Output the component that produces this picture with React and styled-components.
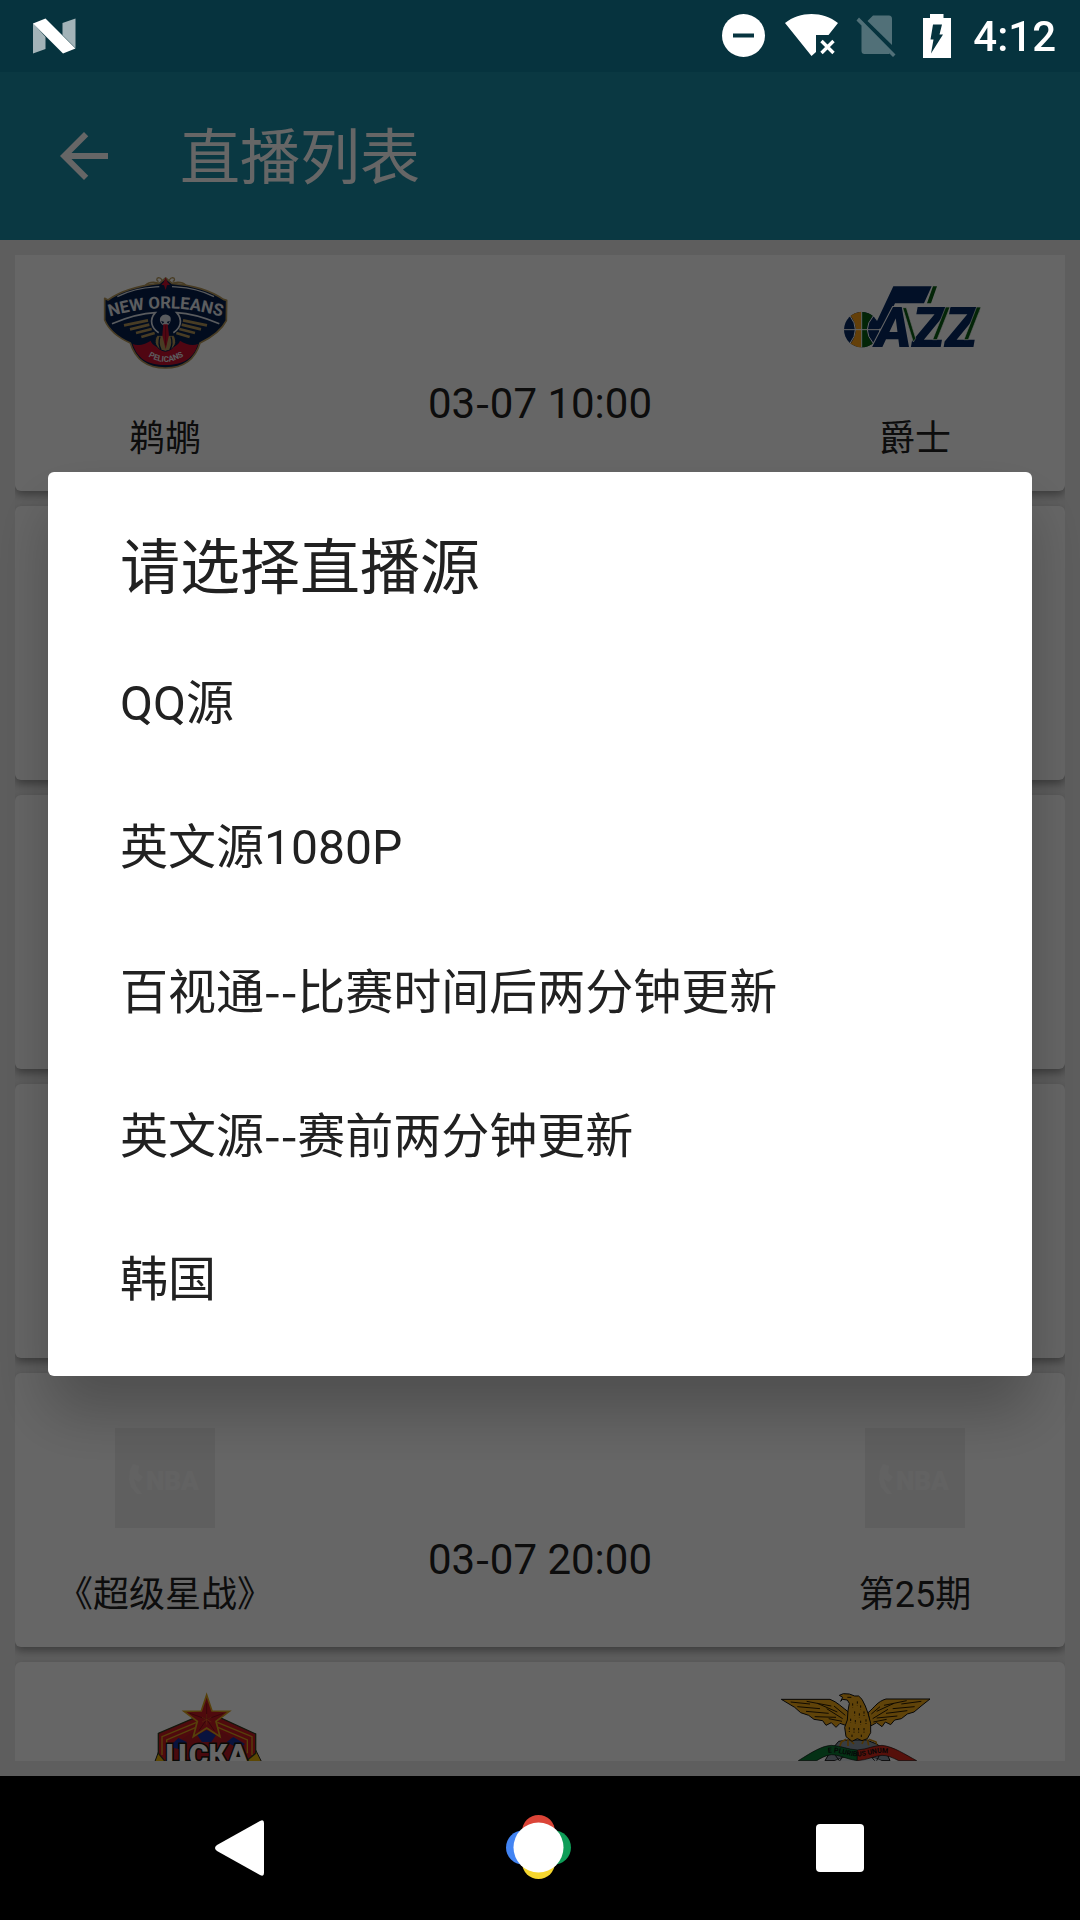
import React, { useLayoutEffect, useRef } from "react";
import styled, { createGlobalStyle } from "styled-components";

const GlobalStyle = createGlobalStyle`
  * { box-sizing: border-box; }
  body {
    margin: 0;
    font-family: Roboto, "Noto Sans CJK SC", sans-serif;
    background: #000;
  }
  button { font: inherit; color: inherit; background: none; border: 0; padding: 0; }
  h1, h2, p, ul { margin: 0; padding: 0; font-weight: 400; }
  ul { list-style: none; }
  svg { display: block; flex: none; }
`;

const Screen = styled.div`
  display: flex;
  flex-direction: column;
  height: 100vh;
  overflow: hidden;
  background: #ebebeb;
`;

const StatusBar = styled.header`
  display: flex;
  align-items: center;
  justify-content: space-between;
  flex: none;
  height: 72px;
  padding: 0 24px 0 32px;
  background: #0f809b;
  color: #fff;
`;

const StatusItem = styled.div`
  position: relative;
  z-index: 2;
  display: flex;
  align-items: center;
  gap: 18px;
`;

const Clock = styled.time`
  padding-top: 2px;
  font-size: 42px;
  line-height: 48px;
  font-weight: 500;
`;

const AppBar = styled.div`
  display: flex;
  align-items: center;
  flex: none;
  gap: 60px;
  height: 168px;
  padding: 0 48px;
  background: #1b8ca6;
  color: #fff;
`;

const BackButton = styled.button`
  width: 72px;
  height: 72px;
`;

const PageTitle = styled.h1`
  padding-top: 6px;
  font-size: 60px;
  line-height: 72px;
`;

const ListArea = styled.main`
  display: flex;
  flex: 1;
  min-height: 0;
  padding: 15px;
`;

const MatchList = styled.ul`
  display: flex;
  flex-direction: column;
  flex: 1;
  gap: 15px;
  overflow-y: auto;
  scrollbar-width: none;
`;

const MatchCard = styled.li`
  display: grid;
  grid-template-columns: ${(p) => p.$columns || "300px 1fr 300px"};
  flex: none;
  min-height: 274px;
  border-radius: 6px;
  background: #fff;
  box-shadow: 0 4px 8px rgba(0, 0, 0, 0.36);
`;

const Team = styled.div`
  display: flex;
  flex-direction: column;
  align-items: center;
  gap: 20px;
  padding-top: 30px;
`;

const TeamName = styled.p`
  font-size: 36px;
  line-height: 44px;
  color: #212121;
`;

const Kickoff = styled.time`
  align-self: end;
  padding-bottom: 63px;
  font-size: 42px;
  line-height: 48px;
  text-align: center;
  color: #212121;
`;

const Dash = styled.span`
  font-family: "Noto Sans CJK SC", sans-serif;
  line-height: 1;
`;

const Overlay = styled.div`
  position: fixed;
  inset: 0;
  z-index: 1;
  display: flex;
  align-items: center;
  padding: 72px 48px 144px;
  background: rgba(0, 0, 0, 0.6);
`;

const Dialog = styled.section`
  flex: 1;
  padding: 57px 0 24px;
  border-radius: 6px;
  background: #fff;
  color: #212121;
  box-shadow: 0 36px 60px rgba(0, 0, 0, 0.24);
`;

const DialogTitle = styled.h2`
  padding: 0 72px 23px;
  font-size: 60px;
  line-height: 80px;
`;

const SourceButton = styled.button`
  display: block;
  width: 100%;
  height: 144px;
  padding: 0 72px;
  font-size: 48px;
  line-height: 56px;
  text-align: left;
`;

const NavBar = styled.nav`
  position: relative;
  z-index: 2;
  display: flex;
  flex: none;
  height: 144px;
  padding: 0 90px;
  background: #000;
`;

const NavButton = styled.button`
  display: flex;
  flex: 1;
  align-items: center;
  justify-content: center;
`;

function StatusIcons() {
  return (
    <>
      <svg width="44" height="44" viewBox="722 15 44 44" aria-hidden="true">
        <circle cx="743.5" cy="36.5" r="21.5" fill="#fff" />
        <path d="M733 34.5h21v4h-21z" fill="#07343f" />
      </svg>
      <svg width="54" height="44" viewBox="784 15 54 44" aria-hidden="true">
        <path d="M785 24C800 12 823 12 838 24L828.500 36H816V53L811.500 57Z" fill="#fff" />
        <path d="M821.500 42L833.500 54M833.500 42L821.500 54" stroke="#fff" strokeWidth="3.400" />
      </svg>
      <svg width="48" height="44" viewBox="856 15 48 44" aria-hidden="true">
        <g fill="#fff" opacity=".3">
          <path d="M873 16.500H889Q892 16.500 892 20V46L867.500 22Z" />
          <path d="M859 18.500L895.500 55.500L893 58L889.500 54.500Q888.800 55 888 55H864.500Q861.500 55 861.500 52V26.500L856.500 21.500Z" />
        </g>
      </svg>
      <svg width="33" height="44" viewBox="922 14 33 44" aria-hidden="true">
        <path fill="#fff" fillRule="evenodd" d="M930 14H943.500V18H951V58H923V18H930ZM933 24.500H942L939.500 34.500H943L931 53.500L933.500 39.500H930.500Z" />
      </svg>
    </>
  );
}

function NougatIcon() {
  return (
    <svg width="44" height="36" viewBox="32 18 44 36" aria-hidden="true">
      <path d="M33 23L45.500 37V49L33 53.500ZM75.500 18.500V48L62.500 35V23Z" fill="#fff" opacity=".63" />
      <path d="M33 23.500L45.500 18.500L75.500 48.500L63 53.500Z" fill="#fff" />
    </svg>
  );
}

function PelicansLogo() {
  const shield =
    "M74 145L84 150C130 116 195 105 238 100L257 84L276 100C330 105 390 120 430 148L440 151L439 212C426 238 400 260 360 279C345 330 310 354 256 354C202 354 166 328 151 279C112 262 85 236 74 210Z";
  return (
    <svg width="150" height="150" viewBox="30 -9 450 450" role="img" aria-label="New Orleans Pelicans">
      <g fill="none" stroke="#b4975a" strokeWidth="4">
        <path d="M196 106C210 92 232 96 246 104C250 92 244 84 236 83C228 84 229 94 236 94M318 106C304 92 282 96 268 104C264 92 270 84 278 83C286 84 285 94 278 94" />
      </g>
      <path d={shield} fill="#051f4d" stroke="#b4975a" strokeWidth="5" strokeLinejoin="round" />
      <path d="M257 82L263 97L270 104L261 106L257 120L252 106L244 104L251 97Z" fill="#c8102e" />
      <path d="M112 140C170 110 222 112 238 110M402 140C344 110 294 112 276 110" fill="none" stroke="#dfe3ea" strokeWidth="4" />
      <path d="M96 221C140 203 180 190 226 188C206 210 215 236 236 248M418 221C374 203 334 190 290 188C310 210 301 236 280 248" fill="none" stroke="#dfe3ea" strokeWidth="5" />
      <path d="M158 282C176 290 200 281 212 272C220 302 292 302 300 272C316 282 336 290 354 282C341 326 310 345 256 345C202 345 172 326 158 282Z" fill="#c8102e" />
      <g stroke="#b4975a" strokeWidth="8">
        <path d="M204 211L132 226M208 224L150 238M215 237L168 249M224 249L184 261" />
        <path d="M309 211L381 226M305 224L363 238M298 237L345 249M289 249L329 261" />
      </g>
      <path d="M232 256C218 274 226 298 256 304C287 298 294 274 281 256Z" fill="#b4975a" stroke="#051f4d" strokeWidth="3" />
      <path d="M240 260Q233 282 243 299M273 260Q280 282 270 299" fill="none" stroke="#051f4d" strokeWidth="4" />
      <path d="M242 201C250 190 265 192 271 201C275 212 268 224 262 226H250C243 222 236 211 242 201Z" fill="#dfe3ea" />
      <path d="M243 212L253 216L248 221ZM270 212L260 216L265 221Z" fill="#051f4d" />
      <path d="M250 223L263 223L267 256L257 298L247 256Z" fill="#c8102e" />
      <path d="M257 226V286" stroke="#6e0b1e" strokeWidth="2" />
      <path id="orleansArc" d="M76 204Q257 146 438 204" fill="none" />
      <text fill="#e6e9ee" fontFamily="Roboto, sans-serif" fontWeight="700" fontSize="50" textAnchor="middle">
        <textPath href="#orleansArc" startOffset="50%">NEW ORLEANS</textPath>
      </text>
      <path id="pelicansArc" d="M180 300Q257 372 336 298" fill="none" />
      <text fill="#e6e9ee" fontFamily="Roboto, sans-serif" fontWeight="700" fontSize="24" textAnchor="middle">
        <textPath href="#pelicansArc" startOffset="50%">PELICANS</textPath>
      </text>
    </svg>
  );
}

function JazzLogo() {
  return (
    <svg width="150" height="150" viewBox="60 -9 450 450" role="img" aria-label="Utah Jazz">
      <g>
        <circle cx="125" cy="239" r="53" fill="#052a63" />
        <path d="M105 190Q125 183 125 186V292Q112 293 92 281Q122 239 92 197Z" fill="#f9a01b" />
        <path d="M125 186Q142 186 158 197Q124 239 158 281Q142 292 125 292Z" fill="#085c12" />
        <path d="M125 186V292M72 239H180M90 198Q122 239 90 280M160 198Q124 239 160 280" fill="none" stroke="#fff" strokeWidth="3" />
      </g>
      <path d="M220 109H335L312 160H225L188 236H160L170 215Z" fill="#052a63" />
      <path d="M339 109H351L333 160H321Z" fill="#085c12" />
      <text x="166" y="291" fill="#052a63" stroke="#fff" strokeWidth="6" paintOrder="stroke" fontFamily="Roboto, sans-serif" fontWeight="900" fontStyle="italic" fontSize="166">
        AZZ
      </text>
      <path d="M248 173H259L287 265L280 276Z" fill="#085c12" stroke="#fff" strokeWidth="2" />
      <path d="M377 171H390L351 269H338ZM470 171H483L445 269H432Z" fill="#085c12" stroke="#fff" strokeWidth="2" />
    </svg>
  );
}

function CskaLogo() {
  return (
    <svg width="150" height="150" viewBox="6 156 450 450" role="img" aria-label="ЦСКА">
      <path d="M72 372L86 334L100 350L122 420H72ZM398 372L372 320L352 350V420H398Z" fill="#e8b50c" stroke="#222" strokeWidth="3" />
      <path d="M85 280L190 235H275L377 282V340L340 370H110L85 340Z" fill="#c61b22" stroke="#333a20" strokeWidth="4" />
      <path d="M96 345V290L200 247M366 345V290L262 247M110 340V300L198 262M352 340V300L264 262" fill="none" stroke="#d9a21b" strokeWidth="4" />
      <path d="M120 320L196 270H266L345 315L350 420H112Z" fill="#b61925" />
      <path d="M118 320L145 294L170 306L158 330ZM202 285L230 270L258 285L244 306H216ZM290 306L310 291L345 312L326 326Z" fill="#17309c" />
      <path d="M230 165L246 213L298 214L258 244L270 290L230 264L190 290L202 244L162 214L214 213Z" fill="#c61b22" stroke="#d9a21b" strokeWidth="5" />
      <path d="M230 190V238M180 220L230 238L280 220M207 272L230 238L253 272" fill="none" stroke="#8a1118" strokeWidth="3" />
      <path d="M230 222V254M216 232L244 246M216 246L244 232" stroke="#e0641d" strokeWidth="2" />
      <text x="231" y="374" textAnchor="middle" fill="#fff" stroke="#14140c" strokeWidth="9" paintOrder="stroke" fontFamily="Roboto, sans-serif" fontWeight="900" fontSize="90">
        ЦСКА
      </text>
    </svg>
  );
}

function BenficaLogo() {
  return (
    <svg width="150" height="150" viewBox="60 156 450 450" role="img" aria-label="Benfica">
      <path d="M195 362Q210 330 236 304L262 300H320L350 312Q380 330 390 362Z" fill="#8a96a3" stroke="#111" strokeWidth="3" />
      <path d="M214 370C240 340 350 340 376 370Z" fill="#dfe3e8" stroke="#111" strokeWidth="2" />
      <path d="M226 346L238 362M250 346L240 362M330 346L344 362M358 346L350 362" stroke="#111" strokeWidth="3" />
      <path d="M115 362C160 334 185 318 214 316C245 318 262 328 292 330V362C262 358 236 344 214 344C196 346 182 355 170 362Z" fill="#0b7a35" stroke="#111" strokeWidth="2" />
      <path d="M292 330C322 328 342 316 366 316C402 320 436 344 470 362H416C396 352 382 346 366 346C342 348 322 360 292 362Z" fill="#d8291c" stroke="#111" strokeWidth="2" />
      <path id="mottoArc" d="M184 344C228 328 250 348 292 349C334 348 356 328 404 346" fill="none" />
      <text fill="#111" fontFamily="Roboto, sans-serif" fontWeight="700" fontSize="21" textAnchor="middle">
        <textPath href="#mottoArc" startOffset="50%">E PLURIBUS UNUM</textPath>
      </text>
      <g fill="#f0a818" stroke="#111" strokeWidth="3" strokeLinejoin="round">
        <path d="M64 178L210 178C232 186 246 202 268 218L262 258L240 250L228 262L214 248L198 256L188 242L162 238L146 226L122 218L104 202Z" />
        <path d="M510 177L378 177C352 184 342 204 324 218L332 258L350 248L366 260L376 246L392 254L404 240L424 236L442 222L462 216L486 196Z" />
        <path d="M258 298L244 306L240 318M264 298V318M270 300L282 312M312 298L306 312M322 298L326 316M326 298L348 306L350 314" fill="none" stroke="#c88408" strokeWidth="5" />
        <path d="M238 166L250 161L268 162L284 168L296 168L306 178L316 198L324 220L332 250V278L322 296L306 302L292 296L276 304L258 290L254 262L262 240L264 212L268 190L262 180L248 178L242 184L248 172Z" />
      </g>
      <g fill="none" stroke="#2b1c02" strokeWidth="3">
        <path d="M92 186L150 192M112 200L180 206M138 214L206 220M164 230L228 232M140 184L214 198M172 190L232 216M200 206L248 236M206 236L246 244M222 198L256 226" />
        <path d="M484 184L424 192M464 200L398 206M442 212L378 220M412 228L350 234M440 182L372 196M402 190L350 214M384 208L338 236M380 238L340 246M360 200L334 222" />
        <path d="M278 190V202M292 184V196M302 196V208M284 214V226M298 220V232M312 214V228M272 236V248M286 240V252M302 242V254M318 238V252M268 262V276M282 264V278M296 264V278M312 264V278M276 284V294M304 284V294" strokeDasharray="7 4" />
        <path d="M262 172H274" />
      </g>
    </svg>
  );
}

function PlaceholderLogo() {
  return (
    <svg width="150" height="150" viewBox="0 0 150 150" role="img" aria-label="NBA">
      <rect x="25" y="25" width="100" height="100" fill="#eeeeee" />
      <path d="M43 61L49 63L48 70L53 74L49 79L44 76L46 83L52 91H47L41 84L39 76L40 67Z" fill="#f5f5f5" />
      <text x="56" y="87" fill="#f6f6f6" fontFamily="Roboto, sans-serif" fontWeight="900" fontSize="26">
        NBA
      </text>
    </svg>
  );
}

const matches = [
  { id: 1, home: "鹈鹕", away: "爵士", time: "03-07 10:00", HomeLogo: PelicansLogo, AwayLogo: JazzLogo },
  { id: 2 },
  { id: 3 },
  { id: 4 },
  { id: 5, home: "《超级星战》", away: "第25期", time: "03-07 20:00", HomeLogo: PlaceholderLogo, AwayLogo: PlaceholderLogo },
  { id: 6, HomeLogo: CskaLogo, AwayLogo: BenficaLogo, columns: "384px 1fr 420px" },
];

const sources = ["QQ源", "英文源1080P", "百视通--比赛时间后两分钟更新", "英文源--赛前两分钟更新", "韩国"];

// Hyphens are set in the CJK face, whose dash is a little longer than Roboto's.
function Label({ text }) {
  return text
    .split(/(-+)/)
    .map((part, i) => (part.startsWith("-") ? <Dash key={i}>{part}</Dash> : part));
}

function Match({ home, away, time, HomeLogo, AwayLogo, columns }) {
  return (
    <MatchCard $columns={columns}>
      <Team>
        {HomeLogo && <HomeLogo />}
        {home && <TeamName>{home}</TeamName>}
      </Team>
      <Kickoff>{time && <Label text={time} />}</Kickoff>
      <Team>
        {AwayLogo && <AwayLogo />}
        {away && <TeamName>{away}</TeamName>}
      </Team>
    </MatchCard>
  );
}

export default function App() {
  const list = useRef(null);

  useLayoutEffect(() => {
    list.current.scrollTop = 38;
  }, []);

  return (
    <Screen lang="zh-CN">
      <GlobalStyle />
      <StatusBar>
        <StatusItem>
          <NougatIcon />
        </StatusItem>
        <StatusItem>
          <StatusIcons />
          <Clock>4:12</Clock>
        </StatusItem>
      </StatusBar>
      <AppBar>
        <BackButton aria-label="返回">
          <svg width="72" height="72" viewBox="0 0 24 24" aria-hidden="true">
            <path d="M20 11H7.830l5.590-5.590L12 4l-8 8 8 8 1.410-1.410L7.830 13H20v-2z" fill="#fff" />
          </svg>
        </BackButton>
        <PageTitle>直播列表</PageTitle>
      </AppBar>
      <ListArea>
        <MatchList ref={list}>
          {matches.map((m) => (
            <Match key={m.id} {...m} />
          ))}
        </MatchList>
      </ListArea>
      <NavBar>
        <NavButton aria-label="后退">
          <svg width="50" height="58" viewBox="0 0 50 58">
            <path d="M2 26L45 2Q49 0 49 4V54Q49 58 45 56L2 32Q-2 29 2 26Z" fill="#fff" />
          </svg>
        </NavButton>
        <NavButton aria-label="主屏幕">
          <svg width="68" height="66" viewBox="0 0 68 66">
            <circle cx="32.5" cy="16.5" r="16.5" fill="#db4437" />
            <circle cx="32.5" cy="47.5" r="16.5" fill="#f6d72f" />
            <circle cx="17" cy="32.5" r="17" fill="#4284f3" />
            <circle cx="48" cy="32.5" r="17" fill="#0f9d58" />
            <circle cx="32.5" cy="32.5" r="25" fill="#fff" />
          </svg>
        </NavButton>
        <NavButton aria-label="最近任务">
          <svg width="48" height="48" viewBox="0 0 48 48">
            <rect width="48" height="48" rx="4" fill="#fff" />
          </svg>
        </NavButton>
      </NavBar>
      <Overlay>
        <Dialog role="dialog" aria-modal="true" aria-labelledby="source-title">
          <DialogTitle id="source-title">请选择直播源</DialogTitle>
          <ul>
            {sources.map((s) => (
              <li key={s}>
                <SourceButton>
                  <Label text={s} />
                </SourceButton>
              </li>
            ))}
          </ul>
        </Dialog>
      </Overlay>
    </Screen>
  );
}
